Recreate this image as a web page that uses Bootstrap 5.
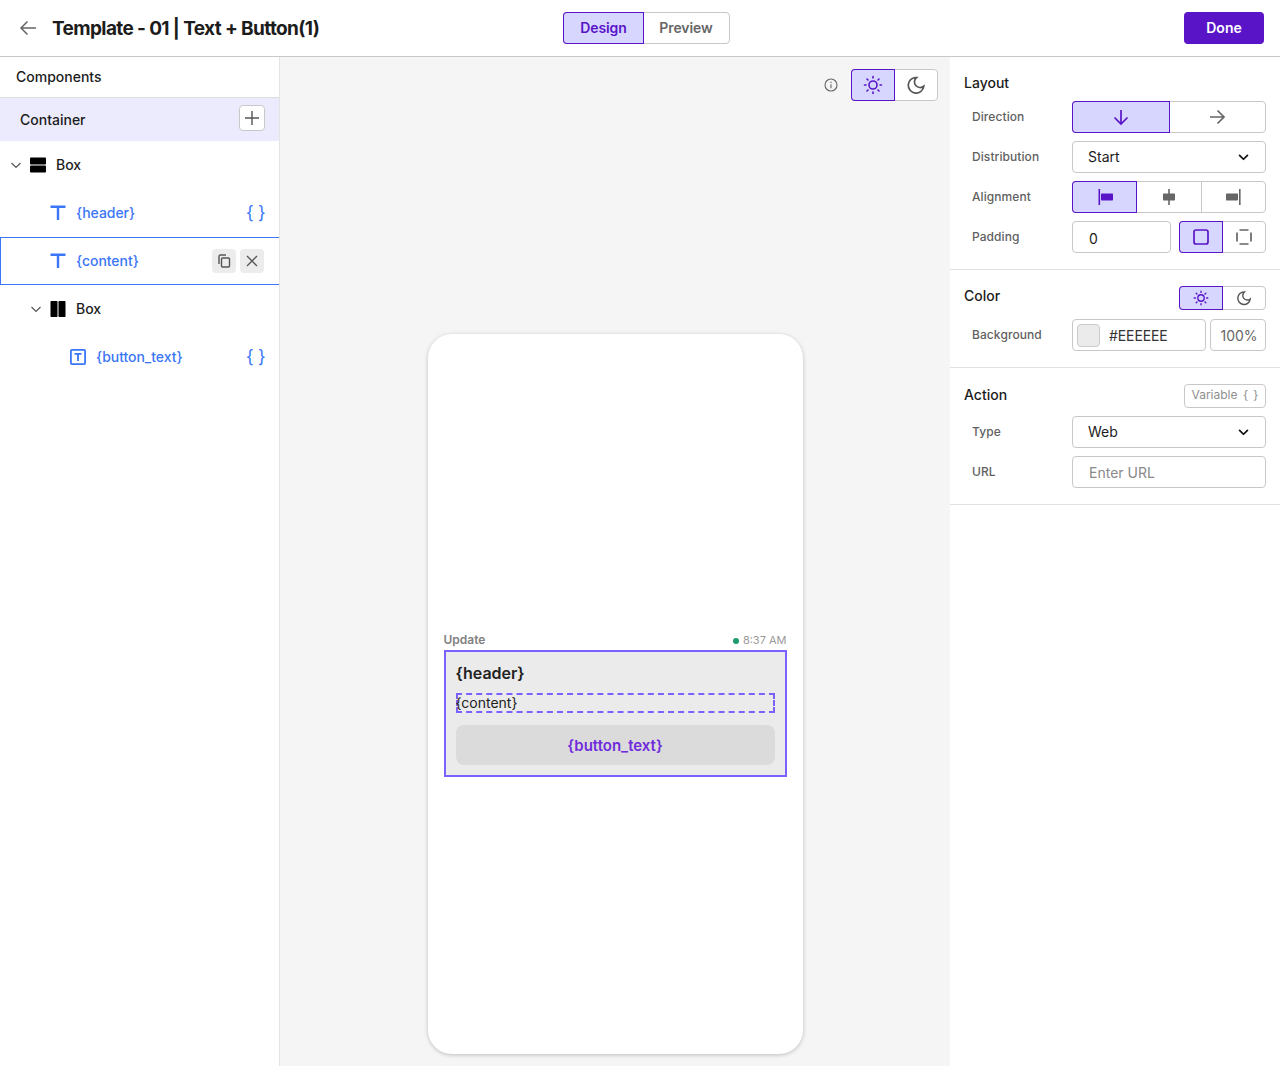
<!DOCTYPE html>
<html lang="en">
<head>
<meta charset="utf-8">
<title>Template</title>
<link href="https://cdn.jsdelivr.net/npm/bootstrap@5.3.0/dist/css/bootstrap.min.css" rel="stylesheet">
<style>
:root{--pur:#5a14c8;--act:#d6d6ff;--line:#c8c8c8;--ink:#1c1c1c;--blue:#3b76f6;}
html,body{height:100%;}
body{font-family:Inter,"Liberation Sans",sans-serif;color:var(--ink);background:#fff;font-size:14px;overflow:hidden;}
svg{display:block;flex:none;}
.app-shell{width:1280px;height:1066px;}
.top-bar{height:57px;border-bottom:1px solid var(--line);padding:0 16px;}
.back-wrap{width:36px;}
.page-title{font-size:19px;font-weight:700;letter-spacing:-.62px;margin:0;padding-top:2px;width:511px;white-space:nowrap;line-height:24px;}
.seg{display:flex;border:1px solid var(--line);border-radius:4px;background:#fff;}
.seg>.seg-item{background:transparent;border:0;padding:0;margin:0;display:flex;align-items:center;justify-content:center;color:#666;height:100%;border-radius:0;flex:none;}
.seg>.seg-item.on{background:var(--act);color:var(--pur);box-shadow:0 0 0 1px var(--pur);position:relative;z-index:1;}
.seg>.seg-item.on:first-child{border-radius:3px 0 0 3px;}
.seg>.seg-item+.seg-item:not(.on){border-left:1px solid var(--line);}
.seg>.seg-item.on+.seg-item{border-left:0;}
.mode-seg{width:167px;height:32px;}
.mode-seg .seg-item{font-weight:600;font-size:14px;padding-bottom:2px;letter-spacing:-.1px;}
.mode-seg .seg-item:first-child{width:79px;}
.mode-seg .seg-item:last-child{width:86px;}
.btn-done{width:80px;height:32px;background:var(--pur);border:0;color:#fff;font-size:14px;font-weight:600;padding:0 0 2px;border-radius:4px;}
.btn-done:hover{background:var(--pur);color:#fff;}
.work-area{height:1009px;}
.left-pane{width:280px;border-right:1px solid #e4e4e4;flex:none;}
.pane-title{height:41px;border-bottom:1px solid #dcdcdc;padding:0 16px;font-weight:500;font-size:14px;line-height:40px;}
.cont-row{height:43px;background:#ecebfd;padding:0 14px 0 20px;font-weight:500;}
.add-btn{width:26px;height:26px;border:1px solid #c8c8c8;border-radius:4px;background:#fff;padding:0;margin-bottom:4px;}
.tree-row{height:48px;font-size:14px;font-weight:500;padding-right:16px;}
.tree-row.sel{border:1px solid var(--blue);border-right:0;padding-right:15px;}
.lv0{padding-left:10px;}
.lv1{padding-left:50px;}
.lv1b{padding-left:30px;}
.lv2{padding-left:70px;}
.tree-row.sel.lv1{padding-left:49px;}
.tree-label{margin-left:10px;padding-bottom:2px;}
.var-label{color:var(--blue);margin-left:10px;font-size:14px;padding-bottom:2px;letter-spacing:-.05px;}
.brace-mark{color:var(--blue);font-size:18px;font-weight:400;margin-left:auto;line-height:1;width:17px;letter-spacing:-.4px;white-space:nowrap;}
.tool-btn{width:24px;height:24px;background:#ececec;border:0;border-radius:4px;padding:0;display:flex;align-items:center;justify-content:center;}
.canvas-pane{width:670px;background:#f5f5f5;flex:none;height:1009px;padding-top:12px;}
.canvas-tools{padding-right:12px;height:32px;}
.info-ic{margin-right:13px;}
.theme-seg{width:87px;height:32px;}
.theme-seg .seg-item:first-child{width:42px;}
.theme-seg .seg-item:last-child{width:43px;}
.phone{width:375px;height:720px;margin:233px auto 0;background:#fff;border-radius:24px;padding:298px 16px 0;box-shadow:0 1px 4px rgba(0,0,0,.22);}
.msg-meta{height:16px;font-size:12px;line-height:16px;margin-bottom:2px;}
.msg-tag{font-weight:600;color:#808080;}
.msg-time{color:#9a9a9a;font-size:11px;}
.dot-live{width:6px;height:6px;border-radius:50%;background:#1c9a6c;display:inline-block;margin-right:4px;vertical-align:0;}
.msg-box{height:127px;border:2px solid #7b61ff;background:#ebebeb;padding:10px;}
.msg-head{font-size:16px;font-weight:600;line-height:22px;height:22px;margin-bottom:9px;color:#222;}
.msg-body{height:20px;border:2px dashed #7b61ff;font-size:14px;line-height:16px;color:#222;margin-bottom:12px;white-space:nowrap;text-indent:-2px;}
.msg-btn{height:40px;background:#dbdbdb;border-radius:8px;color:#6f2bdc;font-weight:600;font-size:15px;line-height:41px;text-align:center;}
.right-pane{width:330px;flex:none;}
.prop-sec{padding:0 14px;border-bottom:1px solid #e2e2e2;}
.prop-sec.s1{height:213px;padding-top:17px;}
.prop-sec.s2{height:98px;padding-top:16px;}
.prop-sec.s3{height:137px;padding-top:16px;}
.sec-title{font-size:14px;font-weight:500;line-height:17px;}
.sec-title.lift{padding-bottom:6px;}
.sec-title.lift-s{padding-bottom:4px;}
.prop-row{height:32px;margin-bottom:8px;}
.prop-label{width:108px;padding-left:8px;font-size:12px;font-weight:500;color:#5f5f5f;flex:none;letter-spacing:.08px;}
.ctl{width:194px;height:32px;}
.dir-seg .seg-item:first-child{width:96px;}
.dir-seg .seg-item:last-child{width:96px;}
.ali-seg .seg-item:first-child{width:63px;}
.ali-seg .seg-item:nth-child(2){width:65px;}
.ali-seg .seg-item:last-child{width:64px;}
.form-select.fld,.form-control.fld{height:32px;font-size:14px;border-color:var(--line);border-radius:4px;padding:0 15px;color:var(--ink);box-shadow:none;}
.form-select.fld{padding-bottom:2px;background-image:url("data:image/svg+xml,%3csvg xmlns='http://www.w3.org/2000/svg' viewBox='0 0 12 8'%3e%3cpath fill='none' stroke='%23111' stroke-width='2' stroke-linecap='round' stroke-linejoin='round' d='M1.5 1.500 6 6l4.500-4.500'/%3e%3c/svg%3e");background-size:11px 7px;background-position:right 16px center;}
.form-control.fld::placeholder{color:#8a8a8a;opacity:1;}
.url-input{padding-left:16px!important;}
.pad-input{width:99px!important;padding:2px 0 0 16px!important;flex:none;}
.box-seg{width:87px;height:32px;}
.box-seg .seg-item:first-child{width:42px;}
.box-seg .seg-item:last-child{width:43px;}
.small-seg{height:24px;}
.color-fld{width:134px;height:32px;border:1px solid var(--line);border-radius:4px;padding-left:4px;flex:none;color:#333;letter-spacing:-.1px;}
.swatch-box{width:23px;height:23px;background:#ebebeb;border:1px solid #ccc;border-radius:4px;margin-right:9px;flex:none;}
.pct-fld{width:56px;height:32px;border:1px solid var(--line);border-radius:4px;color:#666;flex:none;padding-left:2px;}
.var-btn{width:82px;height:24px;border:1px solid var(--line);border-radius:4px;background:#fff;color:#8f8f8f;font-size:12px;padding:0 0 2px;white-space:nowrap;word-spacing:2px;}
</style>
</head>
<body>
<div class="app-shell d-flex flex-column">
  <header class="top-bar d-flex align-items-center">
    <div class="back-wrap">
      <svg width="24" height="24" viewBox="0 0 24 24" fill="none" stroke="#666" stroke-width="1.5"><path d="M20 12H5M11.500 5.500 5 12l6.500 6.500"/></svg>
    </div>
    <h1 class="page-title">Template - 01 | Text + Button(1)</h1>
    <div class="seg mode-seg">
      <button class="seg-item on" type="button">Design</button>
      <button class="seg-item" type="button">Preview</button>
    </div>
    <button class="btn btn-done ms-auto" type="button">Done</button>
  </header>

  <div class="work-area d-flex">
    <aside class="left-pane">
      <div class="pane-title">Components</div>
      <div class="cont-row d-flex align-items-center justify-content-between">
        <span>Container</span>
        <button class="add-btn d-flex align-items-center justify-content-center" type="button" aria-label="Add">
          <svg width="16" height="16" viewBox="0 0 16 16" stroke="#555" stroke-width="1.4"><path d="M8 1v14M1 8h14"/></svg>
        </button>
      </div>
      <div class="tree-row lv0 d-flex align-items-center">
        <svg width="12" height="12" viewBox="0 0 12 12" fill="none" stroke="#555" stroke-width="1.2"><path d="M1.500 4 6 8.500 10.500 4"/></svg>
        <svg class="ms-2" width="16" height="16" viewBox="0 0 16 16" fill="#000"><rect y=".5" width="16" height="7" rx=".8"/><rect y="8.500" width="16" height="7" rx=".8"/></svg>
        <span class="tree-label">Box</span>
      </div>
      <div class="tree-row lv1 d-flex align-items-center">
        <svg width="16" height="16" viewBox="0 0 16 16" fill="none" stroke="#3b76f6" stroke-width="2.4"><path d="M.500 1.800h15M8 1.800V15"/></svg>
        <span class="var-label">{header}</span>
        <span class="brace-mark">{ }</span>
      </div>
      <div class="tree-row sel lv1 d-flex align-items-center">
        <svg width="16" height="16" viewBox="0 0 16 16" fill="none" stroke="#3b76f6" stroke-width="2.4"><path d="M.500 1.800h15M8 1.800V15"/></svg>
        <span class="var-label">{content}</span>
        <button class="tool-btn ms-auto" type="button" aria-label="Copy">
          <svg width="16" height="16" viewBox="0 0 16 16" fill="none" stroke="#555" stroke-width="1.4"><rect x="5.500" y="5" width="8" height="9" rx="1"/><path d="M3 11V3.500A1.500 1.500 0 0 1 4.500 2H10"/></svg>
        </button>
        <button class="tool-btn ms-1" type="button" aria-label="Remove">
          <svg width="16" height="16" viewBox="0 0 16 16" fill="none" stroke="#555" stroke-width="1.3"><path d="M3 3l10 10M13 3 3 13"/></svg>
        </button>
      </div>
      <div class="tree-row lv1b d-flex align-items-center">
        <svg width="12" height="12" viewBox="0 0 12 12" fill="none" stroke="#555" stroke-width="1.2"><path d="M1.500 4 6 8.500 10.500 4"/></svg>
        <svg class="ms-2" width="16" height="16" viewBox="0 0 16 16" fill="#000"><rect x=".5" width="7" height="16" rx=".8"/><rect x="8.500" width="7" height="16" rx=".8"/></svg>
        <span class="tree-label">Box</span>
      </div>
      <div class="tree-row lv2 d-flex align-items-center">
        <svg width="16" height="16" viewBox="0 0 16 16" fill="none" stroke="#3b76f6" stroke-width="1.800"><rect x=".9" y=".9" width="14.200" height="14.200" rx="1"/><path d="M4.500 4.900h7M8 4.900V12"/></svg>
        <span class="var-label">{button_text}</span>
        <span class="brace-mark">{ }</span>
      </div>
    </aside>

    <main class="canvas-pane">
      <div class="canvas-tools d-flex align-items-center justify-content-end">
        <svg class="info-ic" width="14" height="14" viewBox="0 0 14 14" fill="none" stroke="#666" stroke-width="1.1"><circle cx="7" cy="7" r="6"/><path d="M7 6.200v4M7 3.800v1.200"/></svg>
        <div class="seg theme-seg">
          <button class="seg-item on" type="button" aria-label="Light">
            <svg width="20" height="20" viewBox="0 0 20 20" fill="none" stroke="#5a14c8" stroke-width="1.600" stroke-linecap="round"><circle cx="10" cy="10" r="4"/><path d="M10 1.500v1.500M10 17v1.500M1.500 10H3M17 10h1.500M4 4l1 1M15 15l1 1M16 4l-1 1M5 15l-1 1"/></svg>
          </button>
          <button class="seg-item" type="button" aria-label="Dark">
            <svg width="20" height="20" viewBox="0 0 20 20" fill="none" stroke="#555" stroke-width="1.700"><path d="M10.500 2.500a7.800 7.800 0 1 0 7.300 8.700 4.800 4.800 0 0 1-7.300-8.700z"/></svg>
          </button>
        </div>
      </div>
      <div class="phone">
        <div class="msg-meta d-flex justify-content-between">
          <span class="msg-tag">Update</span>
          <span class="msg-time"><i class="dot-live"></i>8:37 AM</span>
        </div>
        <div class="msg-box">
          <div class="msg-head">{header}</div>
          <div class="msg-body">{content}</div>
          <div class="msg-btn">{button_text}</div>
        </div>
      </div>
    </main>

    <aside class="right-pane">
      <section class="prop-sec s1">
        <div class="sec-title" style="margin-bottom:10px">Layout</div>
        <div class="prop-row d-flex align-items-center">
          <span class="prop-label">Direction</span>
          <div class="seg ctl dir-seg">
            <button class="seg-item on" type="button" aria-label="Down"><svg width="20" height="20" viewBox="0 0 20 20" fill="none" stroke="#5a14c8" stroke-width="1.700"><path d="M10 3v14M3.500 10.500 10 17l6.500-6.500"/></svg></button>
            <button class="seg-item" type="button" aria-label="Right"><svg width="20" height="20" viewBox="0 0 20 20" fill="none" stroke="#666" stroke-width="1.700"><path d="M3 10h14M10.500 3.500 17 10l-6.500 6.500"/></svg></button>
          </div>
        </div>
        <div class="prop-row d-flex align-items-center">
          <span class="prop-label">Distribution</span>
          <select class="form-select fld ctl"><option>Start</option></select>
        </div>
        <div class="prop-row d-flex align-items-center">
          <span class="prop-label">Alignment</span>
          <div class="seg ctl ali-seg">
            <button class="seg-item on" type="button" aria-label="Left"><svg width="16" height="16" viewBox="0 0 16 16" fill="#5a14c8"><rect x="1.500" y="0" width="1.600" height="16"/><rect x="4" y="4.500" width="12" height="7" rx=".7"/></svg></button>
            <button class="seg-item" type="button" aria-label="Center"><svg width="16" height="16" viewBox="0 0 16 16" fill="#666"><rect x="7.200" y="0" width="1.600" height="16"/><rect x="2" y="4.500" width="12" height="7" rx=".7"/></svg></button>
            <button class="seg-item" type="button" aria-label="Right"><svg width="16" height="16" viewBox="0 0 16 16" fill="#666"><rect x="13" y="0" width="1.600" height="16"/><rect x="0" y="4.500" width="12" height="7" rx=".7"/></svg></button>
          </div>
        </div>
        <div class="prop-row d-flex align-items-center">
          <span class="prop-label">Padding</span>
          <input class="form-control fld pad-input" value="0" aria-label="Padding">
          <div class="seg box-seg ms-2">
            <button class="seg-item on" type="button" aria-label="All"><svg width="16" height="16" viewBox="0 0 16 16" fill="none" stroke="#5a14c8" stroke-width="1.700"><rect x="1" y="1" width="14" height="14" rx="2"/></svg></button>
            <button class="seg-item" type="button" aria-label="Sides"><svg width="16" height="16" viewBox="0 0 16 16" fill="none" stroke="#666" stroke-width="1.700"><path d="M3.500 1h9M3.500 15h9M1 3.500v9M15 3.500v9"/></svg></button>
          </div>
        </div>
      </section>

      <section class="prop-sec s2">
        <div class="d-flex align-items-center justify-content-between" style="margin-bottom:9px;height:24px">
          <span class="sec-title lift">Color</span>
          <div class="seg box-seg small-seg">
            <button class="seg-item on" type="button" aria-label="Light"><svg width="16" height="16" viewBox="0 0 20 20" fill="none" stroke="#5a14c8" stroke-width="1.700" stroke-linecap="round"><circle cx="10" cy="10" r="4"/><path d="M10 1.500v1.500M10 17v1.500M1.500 10H3M17 10h1.500M4 4l1 1M15 15l1 1M16 4l-1 1M5 15l-1 1"/></svg></button>
            <button class="seg-item" type="button" aria-label="Dark"><svg width="16" height="16" viewBox="0 0 20 20" fill="none" stroke="#555" stroke-width="1.800"><path d="M10.500 2.500a7.800 7.800 0 1 0 7.300 8.700 4.800 4.800 0 0 1-7.300-8.700z"/></svg></button>
          </div>
        </div>
        <div class="prop-row d-flex align-items-center">
          <span class="prop-label">Background</span>
          <div class="color-fld d-flex align-items-center"><span class="swatch-box"></span><span>#EEEEEE</span></div>
          <div class="pct-fld d-flex align-items-center justify-content-center ms-1">100%</div>
        </div>
      </section>

      <section class="prop-sec s3">
        <div class="d-flex align-items-center justify-content-between" style="margin-bottom:8px;height:24px">
          <span class="sec-title lift-s">Action</span>
          <button class="var-btn" type="button">Variable { }</button>
        </div>
        <div class="prop-row d-flex align-items-center">
          <span class="prop-label">Type</span>
          <select class="form-select fld ctl"><option>Web</option></select>
        </div>
        <div class="prop-row d-flex align-items-center">
          <span class="prop-label">URL</span>
          <input class="form-control fld ctl url-input" placeholder="Enter URL" aria-label="URL">
        </div>
      </section>
    </aside>
  </div>
</div>
<script src="https://cdn.jsdelivr.net/npm/bootstrap@5.3.0/dist/js/bootstrap.bundle.min.js"></script>
</body>
</html>
